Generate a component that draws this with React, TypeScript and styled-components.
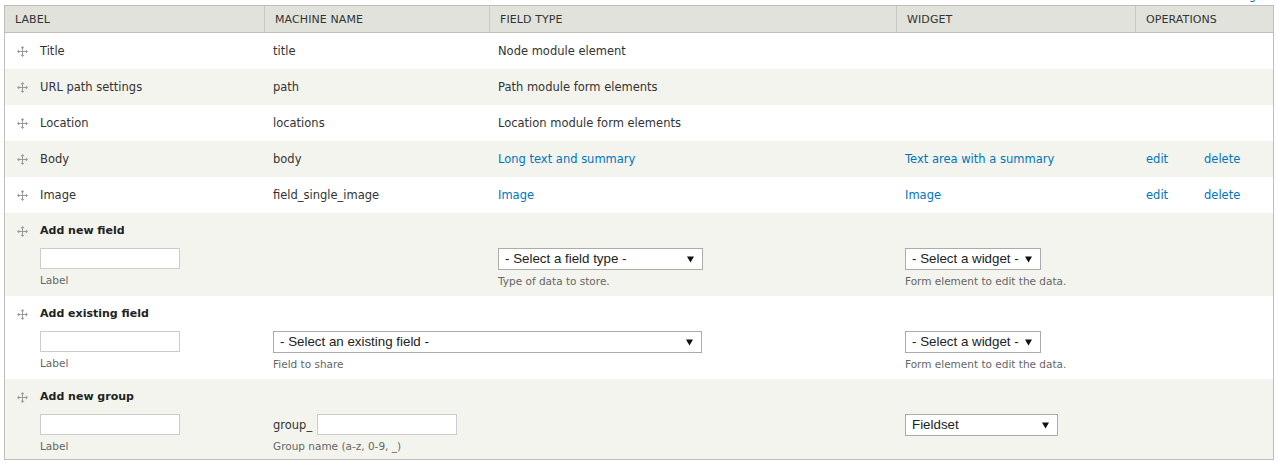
import React from 'react';
import styled, { createGlobalStyle } from 'styled-components';

const GlobalStyle = createGlobalStyle`
  *, *::before, *::after { box-sizing: border-box; }
  html, body { margin: 0; padding: 0; background: #fff; }
  body { font-family: "DejaVu Sans", Verdana, sans-serif; color: #333; }
`;

const Page = styled.div`
  padding: 0 4px 0 4px;
`;

const TopLinks = styled.div`
  height: 5px;
  display: flex;
  justify-content: flex-end;
  align-items: flex-end;
`;

const TopLink = styled.a`
  font-size: 11.5px;
  line-height: 12px;
  margin-bottom: 4px;
  color: #0074bd;
  text-decoration: none;
  white-space: nowrap;
`;

const Table = styled.div`
  border: 1px solid #bebfb9;
`;

const Row = styled.div<{ $alt?: boolean; $form?: boolean; $pb?: number }>`
  display: grid;
  grid-template-columns: 260px 225px 407px 239px 60px 77px;
  background: ${(p) => (p.$alt ? '#f3f4ee' : '#fff')};
  align-items: ${(p) => (p.$form ? 'start' : 'center')};
  min-height: 36px;
  padding-bottom: ${(p) => p.$pb ?? 0}px;
`;

const HeadRow = styled.div`
  display: grid;
  grid-template-columns: 260px 225px 407px 239px 137px;
  background: #e1e2dc;
  border-bottom: 1px solid #bebfb9;
  height: 27px;
`;

const Th = styled.div<{ $last?: boolean }>`
  display: flex;
  align-items: center;
  padding: 0 10px;
  font-size: 11px;
  text-transform: uppercase;
  color: #333;
  border-right: ${(p) => (p.$last ? 'none' : '1px solid #c9cac4')};
  letter-spacing: 0.1px;
`;

const Td = styled.div<{ $span?: number; $offset?: boolean; $pl?: number }>`
  padding: ${(p) => (p.$offset ? '35px' : '0')} 8px 0 ${(p) => p.$pl ?? 8}px;
  font-size: 11.5px;
  line-height: 14px;
  color: #333;
  grid-column: span ${(p) => p.$span ?? 1};
  white-space: nowrap;
`;

const LabelCell = styled.div<{ $form?: boolean }>`
  display: flex;
  align-items: ${(p) => (p.$form ? 'flex-start' : 'center')};
  gap: 12px;
  padding: ${(p) => (p.$form ? '11px' : '0')} 8px 0 12px;
  font-size: 11.5px;
  line-height: 14px;
  color: #333;
  white-space: nowrap;
`;

const Handle = styled.span`
  display: flex;
  width: 11px;
  height: 14px;
  align-items: center;
  justify-content: center;
  flex: none;
`;

const Stack = styled.div`
  display: flex;
  flex-direction: column;
  align-items: flex-start;
`;

const FormTitle = styled.div`
  font-weight: bold;
  font-size: 11px;
  line-height: 14px;
  color: #222;
  margin-bottom: 10px;
`;

const Link = styled.a`
  color: #0074bd;
  text-decoration: none;
`;

const TextInput = styled.input<{ $w?: number }>`
  width: ${(p) => p.$w ?? 140}px;
  height: 21px;
  border: 1px solid #ccc;
  background: #fff;
  margin: 0;
  padding: 0 4px;
  font: 13px "Liberation Sans", Arial, sans-serif;
`;

const SelectBox = styled.div<{ $w: number }>`
  width: ${(p) => p.$w}px;
  height: 22px;
  border: 1px solid #ababab;
  background: #fff;
  display: flex;
  align-items: center;
  justify-content: space-between;
  padding: 0 8px 0 6px;
  font: 13.33px/16px "Liberation Sans", Arial, sans-serif;
  color: #222;
  white-space: nowrap;
`;

const Desc = styled.div`
  margin-top: 4px;
  font-size: 10.5px;
  line-height: 14px;
  color: #666;
  white-space: nowrap;
`;

const Inline = styled.div`
  display: flex;
  align-items: center;
  gap: 5px;
  height: 21px;
  font-size: 11.5px;
  color: #333;
`;

const DragIcon = () => (
  <svg width="11" height="11" viewBox="0 0 11 11" aria-hidden="true">
    <path d="M5.5 2v7M2 5.5h7" stroke="#9a9a9a" strokeWidth="1" fill="none" />
    <path d="M5.5 0L3.5 2.2H7.5Z M5.5 11L3.5 8.8H7.5Z M0 5.5L2.2 3.5V7.5Z M11 5.5L8.8 3.5V7.5Z" fill="#9a9a9a" />
  </svg>
);

const Arrow = () => (
  <svg width="7" height="7" viewBox="0 0 7 7" aria-hidden="true">
    <path d="M0 0.5H7L3.5 6.5Z" fill="#111" />
  </svg>
);

const Select = ({ w, text }: { w: number; text: string }) => (
  <SelectBox $w={w}>
    <span>{text}</span>
    <Arrow />
  </SelectBox>
);

type DataRow = { label: string; machine: string; type: string; widget?: string; linked?: boolean };

const rows: DataRow[] = [
  { label: 'Title', machine: 'title', type: 'Node module element' },
  { label: 'URL path settings', machine: 'path', type: 'Path module form elements' },
  { label: 'Location', machine: 'locations', type: 'Location module form elements' },
  { label: 'Body', machine: 'body', type: 'Long text and summary', widget: 'Text area with a summary', linked: true },
  { label: 'Image', machine: 'field_single_image', type: 'Image', widget: 'Image', linked: true },
];

const FormLabel = ({ title }: { title: string }) => (
  <LabelCell $form>
    <Handle>
      <DragIcon />
    </Handle>
    <Stack>
      <FormTitle>{title}</FormTitle>
      <TextInput type="text" />
      <Desc>Label</Desc>
    </Stack>
  </LabelCell>
);

export default function App() {
  return (
    <>
      <GlobalStyle />
      <Page>
        <TopLinks>
          <TopLink href="#">Show row weights</TopLink>
        </TopLinks>
        <Table>
          <HeadRow>
            <Th>Label</Th>
            <Th>Machine name</Th>
            <Th>Field type</Th>
            <Th>Widget</Th>
            <Th $last>Operations</Th>
          </HeadRow>
          {rows.map((r, i) => (
            <Row key={r.label} $alt={i % 2 === 1}>
              <LabelCell>
                <Handle>
                  <DragIcon />
                </Handle>
                {r.label}
              </LabelCell>
              <Td>{r.machine}</Td>
              <Td>{r.linked ? <Link href="#">{r.type}</Link> : r.type}</Td>
              <Td>{r.widget ? <Link href="#">{r.widget}</Link> : null}</Td>
              <Td $pl={10}>{r.linked ? <Link href="#">edit</Link> : null}</Td>
              <Td>{r.linked ? <Link href="#">delete</Link> : null}</Td>
            </Row>
          ))}
          <Row $alt $form $pb={8}>
            <FormLabel title="Add new field" />
            <Td $offset />
            <Td $offset>
              <Select w={205} text="- Select a field type -" />
              <Desc>Type of data to store.</Desc>
            </Td>
            <Td $offset>
              <Select w={136} text="- Select a widget -" />
              <Desc>Form element to edit the data.</Desc>
            </Td>
            <Td $offset $span={2} />
          </Row>
          <Row $form $pb={8}>
            <FormLabel title="Add existing field" />
            <Td $offset $span={2}>
              <Select w={429} text="- Select an existing field -" />
              <Desc>Field to share</Desc>
            </Td>
            <Td $offset>
              <Select w={136} text="- Select a widget -" />
              <Desc>Form element to edit the data.</Desc>
            </Td>
            <Td $offset $span={2} />
          </Row>
          <Row $alt $form $pb={6}>
            <FormLabel title="Add new group" />
            <Td $offset>
              <Inline>
                group_
                <TextInput type="text" />
              </Inline>
              <Desc>Group name (a-z, 0-9, _)</Desc>
            </Td>
            <Td $offset />
            <Td $offset>
              <Select w={153} text="Fieldset" />
            </Td>
            <Td $offset $span={2} />
          </Row>
        </Table>
      </Page>
    </>
  );
}
